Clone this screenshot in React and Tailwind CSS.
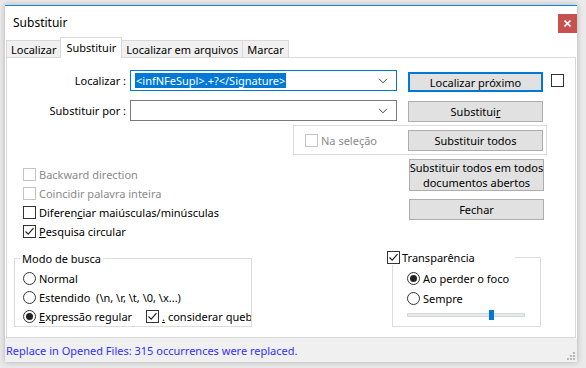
import React from 'react';

const Check = ({ checked = false, disabled = false }) => (
  <span
    className={`inline-flex w-[13px] h-[13px] shrink-0 items-center justify-center border bg-white ${
      disabled ? 'border-[#c4c4c4]' : 'border-[#333333]'
    }`}
  >
    {checked && (
      <svg width="11" height="11" viewBox="0 0 11 11">
        <path d="M1.5 5.5 L4.2 8.2 L9.5 2.2" fill="none" stroke="#222" strokeWidth="1.2" />
      </svg>
    )}
  </span>
);

const Radio = ({ checked = false }) => (
  <span className="inline-flex w-[13px] h-[13px] shrink-0 items-center justify-center rounded-full border border-[#333333] bg-white">
    {checked && <span className="w-[7px] h-[7px] rounded-full bg-[#222222]" />}
  </span>
);

const Btn = ({ children, primary = false, className = '' }) => (
  <div
    className={`flex w-[135px] items-center justify-center whitespace-nowrap bg-[#e1e1e1] text-center leading-[15px] ${
      primary ? 'border-2 border-[#0078d7]' : 'border border-[#adadad]'
    } ${className}`}
  >
    {children}
  </div>
);

const Combo = ({ children, focused = false }) => (
  <div
    className={`flex h-[21px] w-[267px] items-center border bg-white pl-[4px] pr-[6px] ${
      focused ? 'border-[#0078d7]' : 'border-[#7a7a7a]'
    }`}
  >
    <div className="flex-1 overflow-hidden whitespace-nowrap">{children}</div>
    <svg width="10" height="6" viewBox="0 0 10 6" className="mr-[2px]">
      <path d="M1 0.8 L5 4.8 L9 0.8" fill="none" stroke="#444" strokeWidth="1" />
    </svg>
  </div>
);

const CheckRow = ({ checked, disabled, children }) => (
  <div className="flex h-[19px] items-center gap-[3px] whitespace-nowrap">
    <Check checked={checked} disabled={disabled} />
    <span className={disabled ? 'text-[#8a8a8a]' : ''}>{children}</span>
  </div>
);

const RadioRow = ({ checked, children, className = 'h-[20px]' }) => (
  <div className={`flex items-center gap-[3px] whitespace-nowrap ${className}`}>
    <Radio checked={checked} />
    <span>{children}</span>
  </div>
);

export default function App() {
  const tabs = ['Localizar', 'Substituir', 'Localizar em arquivos', 'Marcar'];
  return (
    <div
      className="w-[586px] h-[368px] overflow-hidden bg-[#eaeaea] pt-[5px] pl-[5px] text-[11px] leading-[15px] text-black"
      style={{ fontFamily: '"Noto Sans", "Segoe UI", sans-serif' }}
    >
      <div className="flex h-[357px] w-[572px] flex-col border-t border-[#1a86d9] bg-white shadow-[0_0_6px_rgba(0,0,0,0.25)]">
        {/* title bar */}
        <div className="flex h-[31px] items-start justify-between">
          <span className="pl-[8px] pt-[9px] text-[12px]">Substituir</span>
          <div className="mt-[8px] flex h-[19px] w-[19px] items-center justify-center bg-[#c75050]">
            <svg width="7" height="7" viewBox="0 0 7 7">
              <path d="M0.5 0.5 L6.5 6.5 M6.5 0.5 L0.5 6.5" stroke="#fff" strokeWidth="1.6" />
            </svg>
          </div>
        </div>

        {/* tabs */}
        <div className="flex h-[20px] items-end pl-[1px]">
          {tabs.map((t, i) =>
            i === 1 ? (
              <div
                key={t}
                className="relative z-10 -mb-px -ml-px flex h-[21px] items-start border border-b-0 border-[#d9d9d9] bg-white px-[5px] pt-[2px]"
              >
                {t}
              </div>
            ) : (
              <div
                key={t}
                className="flex h-[17px] items-center border border-b-0 border-[#d9d9d9] bg-[#f0f0f0] px-[4px] -ml-px first:ml-0"
              >
                {t}
              </div>
            )
          )}
        </div>

        {/* panel */}
        <div className="mx-px flex h-[281px] flex-col border border-[#d9d9d9] bg-white pt-[12px]">
          {/* row 1 */}
          <div className="flex items-start">
            <div className="flex h-[21px] w-[119px] items-center justify-end">Localizar :</div>
            <div className="ml-[4px]">
              <Combo focused>
                <span className="bg-[#0078d7] px-[1px] text-white">{'<infNFeSupl>.+?</Signature>'}</span>
              </Combo>
            </div>
            <Btn primary className="ml-[11px] mt-[2px] h-[20px]">Localizar próximo</Btn>
            <div className="ml-[8px] mt-[4px]">
              <Check />
            </div>
          </div>

          {/* row 2 */}
          <div className="mt-[8px] flex items-start">
            <div className="flex h-[21px] w-[119px] items-center justify-end">Substituir por :</div>
            <div className="ml-[4px]">
              <Combo />
            </div>
            <Btn className="ml-[11px] mt-[1px] h-[21px]">
              <span>
                Substitui<span className="underline">r</span>
              </span>
            </Btn>
          </div>

          {/* row 3 */}
          <div className="ml-[286px] mt-[3px] flex h-[30px] w-[254px] items-center border border-[#dcdcdc] pl-[11px]">
            <div className="flex items-center gap-[3px]">
              <Check disabled />
              <span className="text-[#8a8a8a]">Na seleção</span>
            </div>
            <Btn className="ml-auto mr-[3px] h-[21px]">Substituir todos</Btn>
          </div>

          {/* row 4 */}
          <div className="mt-[4px] flex items-start">
            <div className="ml-[16px] mt-[6px] flex flex-col">
              <CheckRow disabled>Backward direction</CheckRow>
              <CheckRow disabled>Coincidir palavra inteira</CheckRow>
              <CheckRow>
                Diferen<span className="underline">c</span>iar maiúsculas/minúsculas
              </CheckRow>
              <CheckRow checked>
                <span className="underline">P</span>esquisa circular
              </CheckRow>
            </div>
            <div className="ml-auto mr-[31px] flex flex-col gap-[8px]">
              <Btn className="h-[32px]">
                <span>
                  Substituir todos em todos
                  <br />
                  documentos abertos
                </span>
              </Btn>
              <Btn className="h-[21px]">Fechar</Btn>
            </div>
          </div>

          {/* row 5 */}
          <div className="mt-[16px] flex items-start">
            <div className="relative ml-[7px] mt-[1px] h-[69px] w-[238px] border border-[#dcdcdc] pl-[8px] pt-[10px]">
              <span className="absolute -top-[8px] left-[5px] bg-white px-[2px]">Modo de busca</span>
              <RadioRow className="h-[19px]">Normal</RadioRow>
              <RadioRow className="h-[19px]">Estendido&nbsp; (\n, \r, \t, \0, \x...)</RadioRow>
              <div className="flex h-[19px] items-center">
                <RadioRow checked className="h-[19px]">
                  <span className="underline">E</span>xpressão regular
                </RadioRow>
                <div className="ml-[14px] flex w-[110px] items-center gap-[3px] overflow-hidden whitespace-nowrap">
                  <Check checked />
                  <span>
                    <span className="underline">.</span> considerar quebr
                  </span>
                </div>
              </div>
            </div>

            <div className="relative ml-[140px] h-[70px] w-[149px] border border-[#dcdcdc] pl-[14px] pt-[10px]">
              <div className="absolute -top-[8px] -left-[6px] flex items-center gap-[2px] bg-white pr-[4px]">
                <Check checked />
                <span>Transparência</span>
                <span className="w-[34px]" />
              </div>
              <RadioRow checked>Ao perder o foco</RadioRow>
              <RadioRow>Sempre</RadioRow>
              <div className="relative mt-[5px] h-[4px] w-[118px] border border-[#d6d6d6] bg-[#e7eaea]">
                <span className="absolute -top-[4px] left-[81px] h-[10px] w-[5px] bg-[#0078d7]" />
              </div>
            </div>
          </div>
        </div>

        {/* status bar */}
        <div className="flex flex-1 items-center justify-between bg-[#f0f0f0] pl-[1px]">
          <span className="text-[#3030ff]">Replace in Opened Files: 315 occurrences were replaced.</span>
          <svg width="10" height="10" viewBox="0 0 10 10" className="mr-[2px] mb-[2px] self-end">
            {[[8, 8], [5, 8], [8, 5], [2, 8], [5, 5], [8, 2]].map(([x, y], i) => (
              <rect key={i} x={x} y={y} width="2" height="2" fill="#b8b8b8" />
            ))}
          </svg>
        </div>
      </div>
    </div>
  );
}
